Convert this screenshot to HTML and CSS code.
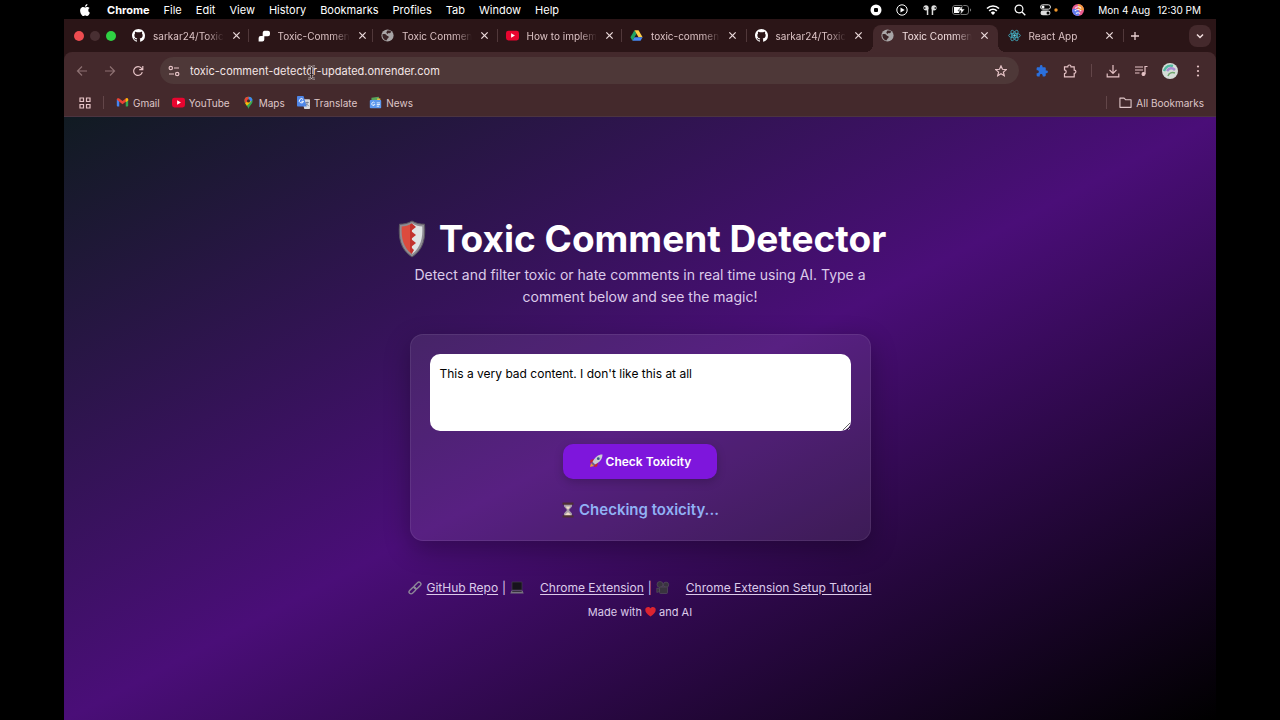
FILE: index.html
```
<!DOCTYPE html>
<html lang="en">

<head>
    <meta charset="UTF-8">
    <meta name="viewport" content="width=device-width, initial-scale=1.0">
    <title>Toxic Comment Detector</title>
    <link rel="stylesheet" href="styles.css">
</head>

<body>
    <!-- Shared icons -->
    <svg class="sprite" aria-hidden="true">
        <symbol id="github" viewBox="0 0 16 16">
            <path fill="#fff" d="M8 0C3.58 0 0 3.58 0 8c0 3.54 2.29 6.53 5.47 7.59.4.07.55-.17.55-.38 0-.19-.01-.82-.01-1.49-2.01.37-2.53-.49-2.69-.94-.09-.23-.48-.94-.82-1.13-.28-.15-.68-.52-.01-.53.63-.01 1.08.58 1.23.82.72 1.21 1.87.87 2.33.66.07-.52.28-.87.51-1.07-1.78-.2-3.64-.89-3.64-3.95 0-.87.31-1.59.82-2.15-.08-.2-.36-1.02.08-2.12 0 0 .67-.21 2.2.82.64-.18 1.32-.27 2-.27s1.36.09 2 .27c1.53-1.04 2.2-.82 2.2-.82.44 1.1.16 1.92.08 2.12.51.56.82 1.27.82 2.15 0 3.07-1.87 3.75-3.65 3.95.29.25.54.73.54 1.48 0 1.07-.01 1.93-.01 2.2 0 .21.15.46.55.38A8.01 8.01 0 0 0 16 8c0-4.42-3.58-8-8-8z" />
        </symbol>
        <symbol id="globe" viewBox="0 0 16 16">
            <circle cx="8" cy="8" r="7.5" fill="#a8a5a6" />
            <path fill="#3a2426" d="M1.800 6.500c2-.6 4.200-.3 5 1.200.6 1.100 2.700.5 2.700 2 0 1.300-1.700 1.500-2 3-.2 1-.7 1.500-1.500 1.500C3 13 1.300 10 1.800 6.500zM7.500 2c2-.6 4 0 5.300 1.400L11 5.300 9.300 4.800 8 6.200 6.500 4.700z" />
        </symbol>
        <symbol id="youtube" viewBox="0 0 16 16">
            <rect x="0" y="2" width="16" height="12" rx="3" fill="#e8052f" />
            <path fill="#fff" d="M6.300 5.300v5.400L11 8z" />
        </symbol>
        <symbol id="close" viewBox="0 0 10 10">
            <path d="M1.500 1.500l7 7M8.500 1.500l-7 7" fill="none" stroke="currentColor" stroke-width="1.400" />
        </symbol>
    </svg>

    <nav class="menubar">
        <svg class="apple" viewBox="0 0 24 24"><path fill="#fff" d="M12.152 6.896c-.948 0-2.415-1.078-3.960-1.040-2.040.027-3.910 1.183-4.961 3.014-2.117 3.675-.546 9.103 1.519 12.090 1.013 1.454 2.208 3.090 3.792 3.039 1.520-.065 2.090-.987 3.935-.987 1.831 0 2.350.987 3.960.948 1.637-.026 2.676-1.480 3.676-2.948 1.156-1.688 1.636-3.325 1.662-3.415-.039-.013-3.182-1.221-3.220-4.857-.026-3.040 2.480-4.494 2.597-4.559-1.429-2.090-3.623-2.324-4.390-2.376-2-.156-3.675 1.090-4.610 1.090zM15.530 3.830c.843-1.012 1.400-2.427 1.245-3.830-1.207.052-2.662.805-3.532 1.818-.780.896-1.454 2.338-1.273 3.714 1.338.104 2.715-.688 3.559-1.701" /></svg>
        <div class="menus">
            <button class="menu app-name">Chrome</button>
            <button class="menu">File</button>
            <button class="menu">Edit</button>
            <button class="menu">View</button>
            <button class="menu">History</button>
            <button class="menu">Bookmarks</button>
            <button class="menu">Profiles</button>
            <button class="menu">Tab</button>
            <button class="menu">Window</button>
            <button class="menu">Help</button>
        </div>
        <div class="tray">
            <svg width="12" height="12" viewBox="0 0 12 12"><circle cx="6" cy="6" r="5.500" fill="#fff" /><rect x="4" y="4" width="4" height="4" rx="1" fill="#000" /></svg>
            <svg width="12" height="12" viewBox="0 0 12 12"><circle cx="6" cy="6" r="5.200" fill="none" stroke="#fff" /><path d="M4.500 3.500v5L8.700 6z" fill="#fff" /></svg>
            <svg width="16" height="12" viewBox="0 0 16 12"><g fill="#ddd"><circle cx="4" cy="3.800" r="2.600" /><circle cx="12" cy="3.800" r="2.600" /><path d="M4.800 4h1.500v7H4.800zM9.700 4h1.500v7H9.700z" /></g><path d="M2.800 3v2M13.200 3v2" stroke="#000" /></svg>
            <svg width="20" height="12" viewBox="0 0 20 12"><rect x="0.500" y="1.500" width="16" height="9" rx="2.500" fill="none" stroke="#777" /><path d="M2 3h7l-2 6H2z" fill="#fff" /><path d="M18 4.500c1.500.5 1.500 2.500 0 3z" fill="#777" /><path d="M11 1L6 6.800h3L8 11l5-6h-3z" fill="#fff" stroke="#000" stroke-width=".6" /></svg>
            <svg width="14" height="12" viewBox="0 0 14 12"><path d="M1 4.500a8.500 8.500 0 0 1 12 0M3.200 6.800a5.400 5.400 0 0 1 7.600 0" fill="none" stroke="#fff" stroke-width="1.700" /><path d="M4.800 8.700a3.100 3.100 0 0 1 4.400 0L7 11z" fill="#fff" /></svg>
            <svg width="12" height="12" viewBox="0 0 12 12"><circle cx="5" cy="5" r="3.900" fill="none" stroke="#fff" stroke-width="1.200" /><path d="M8 8l3.300 3.300" stroke="#fff" stroke-width="1.300" /></svg>
            <svg width="18" height="12" viewBox="0 0 18 12"><rect x="0.500" y="0.800" width="10" height="4.400" rx="2.200" fill="none" stroke="#ddd" /><circle cx="3" cy="3" r="1.500" fill="#fff" /><rect x="0.500" y="6.500" width="10" height="4.800" rx="2.400" fill="#ddd" /><circle cx="8" cy="8.900" r="1.500" fill="#000" /><circle cx="16" cy="6" r="1.700" fill="#f0962c" /></svg>
            <svg width="12" height="12" viewBox="0 0 12 12"><circle cx="6" cy="6" r="6" fill="#e85a8e" /><path d="M6 0a6 6 0 0 1 6 6c-2 1-4-1-6 0z" fill="#f39a3c" /><path d="M0 6a6 6 0 0 0 6 6c2-1 2-4 0-6-2-1-4-2-6 0z" fill="#5d7cf0" /><path d="M3 4.500c2-2.500 5-2 6 0M2.800 7c2-2 4.500-2 6.400 0M4 9.500c1-1 3-1 4 0" fill="none" stroke="#fbeef3" stroke-width="1.100" /></svg>
            <span class="clock"><span>Mon 4 Aug</span><span>12:30 PM</span></span>
        </div>
    </nav>

    <div class="browser">
        <div class="tabstrip">
            <div class="lights">
                <span class="light red"></span>
                <span class="light gray"></span>
                <span class="light green"></span>
            </div>
            <div class="tabs">
                <div class="tab">
                    <svg class="favicon"><use href="#github" /></svg>
                    <a class="tab-title" href="#">sarkar24/Toxic</a>
                    <button class="tab-close" aria-label="Close tab"><svg><use href="#close" /></svg></button>
                </div>
                <div class="tab">
                    <svg class="favicon" viewBox="0 0 16 16"><path fill="#fff" d="M9 2h4.500A2.500 2.500 0 0 1 16 4.500v2A2.500 2.500 0 0 1 13.500 9H9v4a2.500 2.500 0 0 1-2.500 2.500H2V11a2.500 2.500 0 0 1 2.500-2.500H7V4.500A2.500 2.500 0 0 1 9 2z" /></svg>
                    <a class="tab-title" href="#">Toxic-Commen</a>
                    <button class="tab-close" aria-label="Close tab"><svg><use href="#close" /></svg></button>
                </div>
                <div class="tab">
                    <svg class="favicon"><use href="#globe" /></svg>
                    <a class="tab-title" href="#">Toxic Commen</a>
                    <button class="tab-close" aria-label="Close tab"><svg><use href="#close" /></svg></button>
                </div>
                <div class="tab">
                    <svg class="favicon"><use href="#youtube" /></svg>
                    <a class="tab-title" href="#">How to implem</a>
                    <button class="tab-close" aria-label="Close tab"><svg><use href="#close" /></svg></button>
                </div>
                <div class="tab">
                    <svg class="favicon" viewBox="0 0 16 16"><path fill="#1ea362" d="M5.500 1.500L8 5.800 3 14.500.5 10.200z" /><path fill="#ffcf48" d="M5.500 1.500h5l5 8.700h-5z" /><path fill="#4688f4" d="M5.500 10.200h10L13 14.500H3z" /></svg>
                    <a class="tab-title" href="#">toxic-commen</a>
                    <button class="tab-close" aria-label="Close tab"><svg><use href="#close" /></svg></button>
                </div>
                <div class="tab last">
                    <svg class="favicon"><use href="#github" /></svg>
                    <a class="tab-title" href="#">sarkar24/Toxic</a>
                    <button class="tab-close" aria-label="Close tab"><svg><use href="#close" /></svg></button>
                </div>
                <div class="tab active">
                    <svg class="favicon"><use href="#globe" /></svg>
                    <a class="tab-title" href="#">Toxic Commen</a>
                    <button class="tab-close" aria-label="Close tab"><svg><use href="#close" /></svg></button>
                </div>
                <div class="tab">
                    <svg class="favicon" viewBox="0 0 16 16"><g fill="none" stroke="#3fa9bd" stroke-width="1.100"><ellipse cx="8" cy="8" rx="7.200" ry="2.800" /><ellipse cx="8" cy="8" rx="7.200" ry="2.800" transform="rotate(60 8 8)" /><ellipse cx="8" cy="8" rx="7.200" ry="2.800" transform="rotate(120 8 8)" /></g><circle cx="8" cy="8" r="1.500" fill="#5fd3e6" /></svg>
                    <a class="tab-title" href="#">React App</a>
                    <button class="tab-close" aria-label="Close tab"><svg><use href="#close" /></svg></button>
                </div>
            </div>
            <button class="new-tab" aria-label="New tab"><svg width="10" height="10" viewBox="0 0 10 10"><path d="M5 1v8M1 5h8" stroke="currentColor" stroke-width="1.300" /></svg></button>
            <button class="tab-search" aria-label="Search tabs"><svg width="8" height="8" viewBox="0 0 8 8"><path d="M1 2.500l3 3 3-3" fill="none" stroke="currentColor" stroke-width="1.500" /></svg></button>
        </div>

        <div class="toolbar">
            <button class="tool dim" aria-label="Back"><svg viewBox="0 0 12 12"><path d="M11 6H1.500M6 1.500L1.500 6 6 10.500" /></svg></button>
            <button class="tool dim" aria-label="Forward"><svg viewBox="0 0 12 12"><path d="M1 6h9.500M6 1.500L10.500 6 6 10.500" /></svg></button>
            <button class="tool" aria-label="Reload"><svg viewBox="0 0 12 12"><path d="M10.300 7.200A4.400 4.400 0 1 1 9.400 3.200L10.800 4.600M10.800 1v3.600H7.200" /></svg></button>
            <div class="omnibox">
                <button class="tool site-info" aria-label="Site information"><svg viewBox="0 0 12 12"><circle cx="2.800" cy="3" r="1.700" /><path d="M6 3h5M1 9h5" /><circle cx="9.200" cy="9" r="1.700" /></svg></button>
                <input class="url" type="text" aria-label="Address" value="toxic-comment-detector-updated.onrender.com">
                <button class="tool" aria-label="Bookmark this page"><svg viewBox="0 0 12 12"><path d="M6 .9l1.500 3.400 3.700.3-2.800 2.500.9 3.600L6 8.800l-3.300 1.900.9-3.600L.8 4.600l3.700-.3z" /></svg></button>
                <svg class="cursor" viewBox="0 0 9 15"><path d="M1 1.200c2 0 3.500.5 3.500 2v8.600c0 1.500-1.500 2-3.500 2M8 1.200c-2 0-3.500.5-3.500 2v8.600c0 1.500 1.500 2 3.500 2M2.500 9.500h4" fill="none" stroke="#c9bcbc" stroke-width="2" /><path d="M1 1.200c2 0 3.500.5 3.500 2v8.600c0 1.500-1.500 2-3.500 2M8 1.200c-2 0-3.500.5-3.500 2v8.600c0 1.500 1.500 2 3.500 2M2.500 9.500h4" fill="none" stroke="#2a1c1d" stroke-width=".8" /></svg>
            </div>
            <div class="actions">
                <button class="tool" aria-label="Extension"><svg class="wide" viewBox="-1 -1 26 26"><path class="blue" d="M20.500 11H19V7c0-1.100-.9-2-2-2h-4V3.500C13 2.120 11.880 1 10.500 1S8 2.120 8 3.500V5H4c-1.100 0-2 .9-2 2v3.800h1.500c1.500 0 2.700 1.200 2.700 2.700s-1.200 2.700-2.700 2.700H2V20c0 1.100.9 2 2 2h3.800v-1.500c0-1.500 1.200-2.700 2.700-2.700s2.700 1.200 2.700 2.700V22H17c1.100 0 2-.9 2-2v-4h1.500a2.500 2.500 0 0 0 0-5z" /></svg></button>
                <button class="tool" aria-label="Extensions"><svg class="wide" viewBox="0 0 14 14"><path d="M1.500 2.800h3.300c0-2.400 3.200-2.400 3.200 0h3.200v3.400c2.300 0 2.300 3.100 0 3.100v3.500H1.500V9.700c2.300-.2 2.300-3.600 0-3.800z" /></svg></button>
                <span class="divider"></span>
                <button class="tool" aria-label="Downloads"><svg class="wide" viewBox="0 0 14 14"><path d="M7 1v8M3.500 5.800L7 9.300l3.500-3.500M1.200 9.500v3.300h11.600V9.500" /></svg></button>
                <button class="tool" aria-label="Media controls"><svg class="wide" viewBox="0 0 14 14"><path d="M1 3h8M1 6h8M1 9h4.500M11 10V2.500h2.500" /><circle cx="9.500" cy="10" r="1.400" fill="currentColor" /></svg></button>
                <button class="tool" aria-label="Profile"><svg class="avatar" viewBox="0 0 16 16"><circle cx="8" cy="8" r="8" fill="#d5ddd8" stroke="none" /><path d="M2 8c2-5 6-6 9-5" stroke="#52b8a0" stroke-width="2.500" /><path d="M5 8c2-3 5-4 8-1" stroke="#a78bd0" stroke-width="2.500" /><path d="M6 13c1-3 4-4 7-3" stroke="#6fa66f" stroke-width="1.500" /></svg></button>
                <button class="tool" aria-label="Menu"><svg viewBox="0 0 12 12"><g fill="currentColor" stroke="none"><circle cx="6" cy="1.500" r="1.100" /><circle cx="6" cy="6" r="1.100" /><circle cx="6" cy="10.500" r="1.100" /></g></svg></button>
            </div>
        </div>

        <div class="bookmarks">
            <button class="tool" aria-label="Apps"><svg viewBox="0 0 12 12"><path d="M1 1h3.500v3.500H1zM7.500 1H11v3.500H7.500zM1 7.500h3.500V11H1zM7.500 7.500H11V11H7.500z" /></svg></button>
            <span class="divider"></span>
            <a class="bookmark" href="#"><svg class="favicon" viewBox="0 0 16 16"><path fill="#4285f4" d="M1 4l3 2.200V13H2a1 1 0 0 1-1-1z" /><path fill="#34a853" d="M15 4l-3 2.200V13h2a1 1 0 0 0 1-1z" /><path fill="#ea4335" d="M1 4.500C1 2.700 3 2.500 4 3.200l4 3 4-3c1-.7 3-.5 3 1.300L8 10z" /><path fill="#fbbc04" d="M12 3.200c1-.7 3-.5 3 1.300v1l-3 2.200z" /></svg>Gmail</a>
            <a class="bookmark" href="#"><svg class="favicon"><use href="#youtube" /></svg>YouTube</a>
            <a class="bookmark" href="#"><svg class="favicon" viewBox="0 0 16 16"><path fill="#34a853" d="M3 6a5 5 0 0 1 10 0c0 4-4 5.500-5 10-1-4.500-5-6-5-10z" /><path fill="#4285f4" d="M8 1a5 5 0 0 1 4.800 3.800L8 10z" /><path fill="#fbbc04" d="M3.800 8.700L8 4l3 3-5 5z" /><path fill="#ea4335" d="M3 6a5 5 0 0 1 5-5v4L4 9z" /><circle cx="8" cy="6" r="1.900" fill="#3d2629" /></svg>Maps</a>
            <a class="bookmark" href="#"><svg class="favicon" viewBox="0 0 16 16"><path fill="#d8d8dc" d="M6 4h9a1 1 0 0 1 1 1v10a1 1 0 0 1-1 1H9z" /><path fill="#4f86e8" d="M1 0h7l4 13H1a1 1 0 0 1-1-1V1a1 1 0 0 1 1-1z" /><path d="M7.500 4.300A2.600 2.600 0 1 0 8 6.500H5.500" fill="none" stroke="#fff" stroke-width="1.200" /><path d="M10.500 8h4M12.500 7v1c0 2-1 3-2 4M11.500 9.500l3 3" fill="none" stroke="#6a7890" /></svg>Translate</a>
            <a class="bookmark" href="#"><svg class="favicon" viewBox="0 0 16 16"><path fill="#58a55c" d="M3 2l9-1 1 5H3z" /><path fill="#e6bd45" d="M10 3h4v3h-4z" /><rect x="1" y="5" width="14" height="10" rx="1" fill="#5c98ee" /><path d="M7 8.500a2 2 0 1 0 .2 2H5.500M9.500 8.500h4M9.500 10.500h4M9.500 12.500h3" fill="none" stroke="#fff" /></svg>News</a>
            <span class="divider push"></span>
            <a class="bookmark" href="#"><svg class="favicon" viewBox="0 0 14 14"><path d="M1 2.300h4.500L7 4h6v8.200H1z" fill="none" stroke="currentColor" stroke-width="1.200" stroke-linejoin="round" /></svg>All Bookmarks</a>
        </div>

        <main class="page">
            <h1>
                <svg class="shield" viewBox="0 0 28 38">
                    <path d="M14 1c4 2.500 8 3.200 12.500 3.200C27.500 18 26 29 14 37 2 29 .5 18 1.500 4.200 6 4.200 10 3.500 14 1z" fill="#8e8c93" stroke="#5b5661" />
                    <path d="M14 3.500C10.500 5.500 7 6.300 3.700 6.400 3.200 18 5 27 14 34z" fill="#dc4b3e" />
                    <path d="M14 3.500c3.500 2 7 2.800 10.300 2.900C24.800 18 23 27 14 34z" fill="#dfe3e4" />
                    <path d="M12 4.500l2-1 4 3.500-5 4 5 4-5 4 5 4-5 4 3 3-2 3.500-2-1.500z" fill="#c2322e" />
                </svg>
                Toxic Comment Detector
            </h1>
            <p class="intro">Detect and filter toxic or hate comments in real time using AI. Type a comment below and see the magic!</p>

            <form class="card">
                <textarea class="comment" aria-label="Comment">This a very bad content. I don't like this at all</textarea>
                <button class="check" type="button">
                    <svg class="emoji" viewBox="0 0 14 14"><path d="M1 13l1-4 3 3z" fill="#e99b3c" /><path d="M5 5L1.500 6 1 9l3-1zM9 9l-1 3.500-3 .5 1-3z" fill="#c4262e" /><path d="M13.500.5C9 .5 6 3 3.500 8L6 10.500c5-2.500 7.500-5.500 7.500-10z" fill="#c9cdd2" /><path d="M3.500 8L6 10.500l-1.500.7L2.800 9.500z" fill="#6f7178" /><circle cx="9.300" cy="4.700" r="1.400" fill="#345c86" /></svg>
                    Check Toxicity
                </button>
                <p class="status">
                    <svg class="emoji" viewBox="0 0 14 16"><path d="M3 2h8v2.500L8 8l3 3.500V14H3v-2.500L6 8 3 4.500z" fill="#a79ca7" /><path d="M4.500 4.500h5L7 7.500zM4 14c0-2.500 2-2.500 3-4 1 1.500 3 1.500 3 4z" fill="#f0dcc8" /><path d="M1.500.5h11v2.300h-11zM1.500 13.200h11v2.300h-11z" fill="#4d2f35" /></svg>
                    Checking toxicity...
                </p>
            </form>

            <footer>
                <div class="links">
                    <svg class="emoji" viewBox="0 0 14 14"><g fill="none" stroke="#8d8798" stroke-width="1.400"><rect x="5.500" y="2.500" width="8" height="4" rx="2" transform="rotate(-45 9.500 4.500)" /><rect x=".5" y="7.500" width="8" height="4" rx="2" transform="rotate(-45 4.500 9.500)" /></g></svg>
                    <a href="#">GitHub Repo</a>
                    <span>|</span>
                    <svg class="emoji after" viewBox="0 0 14 14"><path d="M2 1h10v8H2z" fill="#17131c" stroke="#44404c" stroke-width=".7" /><path d="M1.500 9.500h11l1.200 3H.3z" fill="#77727f" /><path d="M2.500 10h9l.4 1H2z" fill="#37323d" /></svg>
                    <a href="#">Chrome Extension</a>
                    <span>|</span>
                    <svg class="emoji after" viewBox="0 0 14 14"><g fill="#39343f" stroke="#5a5561" stroke-width=".6"><circle cx="4" cy="3.500" r="3" /><circle cx="10" cy="3.800" r="2.700" /><rect x="3.500" y="6" width="8" height="6.500" rx="1" /><path d="M3.500 8L.8 7v4.500l2.700-1z" /></g></svg>
                    <a href="#">Chrome Extension Setup Tutorial</a>
                </div>
                <p class="made">Made with <svg class="heart" viewBox="0 0 12 12"><path d="M6 11.500C2 8.500.3 6.500.3 4 .3 1 4.300-.2 6 2.500 7.700-.2 11.700 1 11.700 4c0 2.500-1.700 4.500-5.700 7.500z" fill="#dc2430" /></svg> and AI</p>
            </footer>
        </main>
    </div>
</body>

</html>
```

FILE: styles.css
```
* {
    box-sizing: border-box;
}

body {
    display: flex;
    flex-direction: column;
    min-height: 100vh;
    margin: 0;
    padding: 0 5%;
    background-color: #000;
    color: #fff;
    font-family: Inter, "Liberation Sans", sans-serif;
    font-size: 11px;
}

button,
input,
textarea {
    margin: 0;
    padding: 0;
    border: 0;
    background: none;
    color: inherit;
    font-family: inherit;
    font-size: inherit;
}

button {
    cursor: pointer;
}

svg {
    flex-shrink: 0;
}

.sprite {
    position: absolute;
    width: 0;
    height: 0;
}

/* System menu bar */
.menubar {
    display: flex;
    align-items: center;
    gap: 16px;
    height: 19px;
    padding: 0 15px;
}

.apple {
    width: 12px;
    height: 12px;
}

.menus {
    display: flex;
    gap: 14px;
}

.app-name {
    font-weight: 700;
}

.tray {
    display: flex;
    align-items: center;
    gap: 14px;
    margin-left: auto;
}

.clock {
    display: flex;
    gap: 7px;
    font-size: 10px;
    white-space: nowrap;
}

/* Browser window */
.browser {
    flex: 1;
    display: flex;
    flex-direction: column;
    background-color: #2b1517;
}

.tabstrip {
    display: flex;
    align-items: center;
    height: 33px;
    padding-right: 5px;
    color: #dcc3c5;
    font-size: 10px;
}

.lights {
    display: flex;
    gap: 6px;
    padding: 0 8px 0 10px;
}

.light {
    width: 10px;
    height: 10px;
    border-radius: 50%;
}

.red {
    background-color: #ee4c50;
}

.gray {
    background-color: #482f32;
}

.green {
    background-color: #2fd143;
}

.tabs {
    flex: 0 1 1000px;
    display: flex;
    align-self: stretch;
    min-width: 0;
}

.tab {
    position: relative;
    flex: 1 1 0;
    display: flex;
    align-items: center;
    gap: 8px;
    min-width: 0;
    padding: 0 10px 0 8px;
}

.tab::after {
    content: "";
    position: absolute;
    right: 0;
    top: 10px;
    width: 1px;
    height: 13px;
    background-color: #51383a;
}

.tab.last::after {
    display: none;
}

.favicon {
    width: 13px;
    height: 13px;
}

.tab-title {
    flex: 1;
    color: inherit;
    text-decoration: none;
    white-space: nowrap;
    mask-image: linear-gradient(to right, #000 75%, transparent);
}

.tab-close {
    display: flex;
    color: #ead9da;
}

.tab-close svg {
    width: 9px;
    height: 9px;
}

.tab.active {
    margin: 6px 2px 0;
    padding-bottom: 6px;
    border-radius: 8px 8px 0 0;
    background-color: #44292c;
    color: #f3dfe0;
}

.tab.active::before,
.tab.active::after {
    content: "";
    position: absolute;
    top: auto;
    bottom: 0;
    width: 8px;
    height: 8px;
}

.tab.active::before {
    left: -8px;
    background: radial-gradient(circle at 0 0, transparent 8px, #44292c 8px);
}

.tab.active::after {
    right: -8px;
    background: radial-gradient(circle at 100% 0, transparent 8px, #44292c 8px);
}

.new-tab {
    display: flex;
    margin-left: 6px;
    color: #ead0d2;
}

.tab-search {
    display: flex;
    align-items: center;
    justify-content: center;
    width: 22px;
    height: 22px;
    margin-left: auto;
    border-radius: 8px;
    background-color: #44292c;
    color: #f3dfe0;
}

.toolbar {
    display: flex;
    align-items: center;
    gap: 16px;
    height: 37px;
    padding: 0 12px;
    border-radius: 8px 8px 0 0;
    background-color: #44292c;
}

.tool {
    display: flex;
    color: #e6c3c6;
}

.tool svg {
    width: 12px;
    height: 12px;
    fill: none;
    stroke: currentColor;
    stroke-width: 1.2;
}

.tool svg.wide {
    width: 14px;
    height: 14px;
}

.tool svg.avatar {
    width: 16px;
    height: 16px;
}

.tool .blue {
    fill: #2b6fdc;
    stroke: none;
}

.tool.dim {
    color: #8d7072;
}

.omnibox {
    position: relative;
    flex: 1;
    display: flex;
    align-items: center;
    gap: 10px;
    height: 27px;
    padding: 0 12px 0 8px;
    border-radius: 14px;
    background-color: #4e3838;
}

.url {
    flex: 1;
    min-width: 0;
    color: #f4e6e6;
    font-size: 11px;
}

.cursor {
    position: absolute;
    left: 147px;
    top: 8px;
    width: 9px;
    height: 15px;
}

.actions {
    display: flex;
    align-items: center;
    gap: 14px;
}

.divider {
    width: 1px;
    height: 13px;
    background-color: #634649;
}

.bookmarks {
    display: flex;
    align-items: center;
    gap: 12px;
    height: 28px;
    padding: 0 12px 0 15px;
    border-bottom: 1px solid #4c3440;
    background-color: #44292c;
    color: #dfc6c8;
    font-size: 10px;
}

.bookmark {
    display: flex;
    align-items: center;
    gap: 4px;
    color: inherit;
    text-decoration: none;
    white-space: nowrap;
}

.push {
    margin-left: auto;
}

/* Page content */
.page {
    flex: 1;
    display: flex;
    flex-direction: column;
    align-items: center;
    justify-content: center;
    padding: 16px;
    background: linear-gradient(to bottom right, #111b22, #4a0e78, #000);
    text-align: center;
}

h1 {
    display: flex;
    align-items: center;
    gap: 13px;
    margin: 0 0 2px;
    padding-left: 4px;
    font-size: 37px;
    font-weight: 700;
    line-height: 46px;
}

.shield {
    width: 28px;
    height: 38px;
}

.intro {
    max-width: 461px;
    margin: 0 0 26px;
    color: #dccbea;
    font-size: 14px;
    line-height: 22px;
}

.card {
    display: flex;
    flex-direction: column;
    align-items: center;
    width: 100%;
    max-width: 461px;
    padding: 19px;
    border: 1px solid rgba(255, 255, 255, 0.08);
    border-radius: 13px;
    background-color: rgba(255, 255, 255, 0.08);
    box-shadow: 0 8px 26px rgba(0, 0, 0, 0.3);
}

.comment {
    width: 100%;
    height: 77px;
    padding: 10px;
    border-radius: 10px;
    background-color: #fff;
    color: #000;
    font-size: 12px;
    line-height: 20px;
}

.check {
    display: flex;
    align-items: center;
    gap: 3px;
    height: 35px;
    margin: 13px 0 20px;
    padding: 0 26px;
    border-radius: 10px;
    background-color: #7e16dc;
    box-shadow: 0 3px 10px rgba(0, 0, 0, 0.2);
    font-size: 12px;
    font-weight: 600;
}

.emoji {
    width: 14px;
    height: 14px;
}

.status {
    display: flex;
    align-items: center;
    gap: 4px;
    margin: 0;
    color: #91b1f5;
    font-size: 15px;
    font-weight: 600;
    line-height: 22px;
}

.status .emoji {
    height: 16px;
}

footer {
    margin-top: 36px;
    color: #dccbea;
}

.links {
    display: flex;
    align-items: center;
    gap: 4px;
    font-size: 12px;
    line-height: 22px;
    white-space: nowrap;
}

.links a {
    color: inherit;
    text-underline-offset: 2px;
}

.links .after {
    margin-right: 12px;
}

.made {
    margin: 3px 0 0;
    font-size: 11px;
    line-height: 20px;
}

.heart {
    width: 11px;
    height: 11px;
    vertical-align: -1px;
}
```
